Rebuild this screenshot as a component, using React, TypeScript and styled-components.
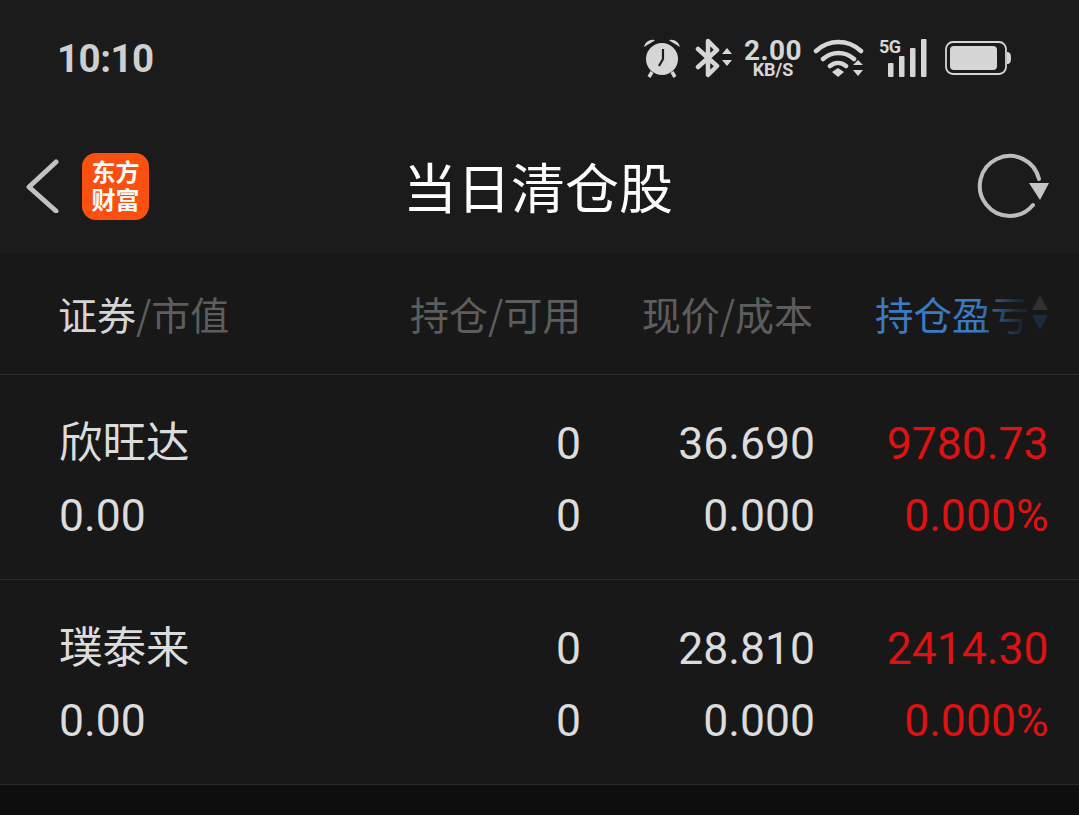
import React from "react";
import styled, { createGlobalStyle } from "styled-components";

const Global = createGlobalStyle`
  html, body { margin: 0; padding: 0; background: #0e0e0e; }
  * { box-sizing: border-box; }
`;
const FONT = `Roboto, "Noto Sans CJK SC", sans-serif`;
const Page = styled.div`
  width: 1079px; height: 815px; overflow: hidden; background: #0e0e0e; font-family: ${FONT};
  display: flex; flex-direction: column;
`;
const TopArea = styled.div`background: #1b1b1b; height: 254px; display: flex; flex-direction: column;`;
const StatusBar = styled.div`
  height: 116px; padding: 0 68px 0 57px; display: flex; align-items: center; justify-content: space-between; color: #d4d4d4;
`;
const Clock = styled.div`font-size: 38.5px; font-weight: 700; letter-spacing: -0.5px; color: #cfcfcf;`;
const StatusIcons = styled.div`display: flex; align-items: center; height: 40px; color: #d6d6d6;`;
const Speed = styled.div`
  width: 60px; margin: 0 10px 0 8px; display: flex; flex-direction: column; align-items: center; font-weight: 700;
`;
const SpeedValue = styled.span`font-size: 28px; line-height: 23px; letter-spacing: 0.4px;`;
const SpeedUnit = styled.span`font-size: 18px; line-height: 15px;`;
const Signal = styled.div`position: relative; width: 50px; height: 38px; margin: 0 16px 0 14px;`;
const FiveG = styled.span`position: absolute; left: 0; top: -1px; font-size: 18px; line-height: 18px; font-weight: 700; letter-spacing: -0.5px;`;
const NavBar = styled.div`flex: 1; position: relative; display: flex; align-items: center; padding: 2px 30px 0 25px; justify-content: space-between;`;
const NavLeft = styled.div`display: flex; align-items: center; gap: 23px;`;
const Logo = styled.div`
  width: 67px; height: 67px; border-radius: 14px; background: #fb5010; color: #fff; font-weight: 700; font-size: 24px; line-height: 28px; padding-bottom: 2px;
  display: flex; flex-direction: column; align-items: center; justify-content: center; font-family: "Noto Sans CJK SC", sans-serif;
`;
const Title = styled.h1`
  position: absolute; left: 0; right: 3px; top: 35px; margin: 0; text-align: center; font-size: 54px; line-height: 70px; font-weight: 400; color: #fff;
  font-family: "Noto Sans CJK SC", sans-serif;
`;
const TableHeader = styled.div`
  height: 121px; background: #181818; border-bottom: 1px solid #2a2a2a; position: relative; padding: 0 30px 2px 58px;
  display: grid; grid-template-columns: 352px 168px 235px 236px; align-items: center; color: #5d5d5d;
  font-family: "Noto Sans CJK SC", sans-serif;
`;
const HeaderCell = styled.div<{ $right?: boolean }>`
  text-align: ${(p) => (p.$right ? "right" : "left")}; white-space: nowrap; line-height: 50px; font-size: 39px;
`;
const Strong = styled.span`color: #d5d5d5;`;
const SortCell = styled.div`
  text-align: right; position: relative; color: #3a7bc4; font-size: 38.5px; line-height: 50px; white-space: nowrap; padding-right: 20px;
`;
const Fade = styled.div`
  position: absolute; right: 0; top: -6px; width: 72px; height: 62px;
  background: linear-gradient(to right, rgba(24,24,24,0), rgba(24,24,24,0.85) 60%, rgba(24,24,24,0.95));
`;
const SortIcon = styled.svg`position: absolute; right: 0; top: 7px;`;
const Row = styled.div`
  height: 205px; background: #181818; border-bottom: 1px solid #2a2a2a; padding: 33px 30px 0 59px;
  display: grid; grid-template-columns: 354px 168px 234px 233.5px; grid-auto-rows: 72px; align-items: start; font-size: 44.5px; color: #dcdcdc;
`;
const Cell = styled.div<{ $right?: boolean; $red?: boolean }>`
  text-align: ${(p) => (p.$right ? "right" : "left")}; line-height: 72px; white-space: nowrap; color: ${(p) => (p.$red ? "#de1212" : "#dcdcdc")};
`;
const Name = styled(Cell)`font-family: "Noto Sans CJK SC", sans-serif; font-size: 43.5px; font-weight: 400; line-height: 64px;`;

const rows = [
  { name: "欣旺达", price: "36.690", pl: "9780.73" },
  { name: "璞泰来", price: "28.810", pl: "2414.30" },
];

export default function App() {
  return (
    <Page>
      <Global />
      <TopArea>
        <StatusBar>
          <Clock>10:10</Clock>
          <StatusIcons>
            <svg width="38" height="40" viewBox="0 0 38 40" style={{ marginRight: 14 }}>
              <circle cx="19" cy="21" r="16" fill="currentColor" />
              <path d="M20 11v10l-4 7" fill="none" stroke="#1b1b1b" strokeWidth="2.2" />
              <path d="M1 9c1-5 6-8 10-7 1 0 1 1 0 1zM37 9c-1-5-6-8-10-7-1 0-1 1 0 1z" fill="currentColor" />
              <path d="M9 34l-3 5M29 34l3 5" stroke="currentColor" strokeWidth="3.5" />
            </svg>
            <svg width="40" height="40" viewBox="0 0 40 40">
              <path d="M3 11l19 17-9 9V3l9 9-19 17" fill="none" stroke="currentColor" strokeWidth="4.5" strokeLinejoin="round" strokeLinecap="round" />
              <path d="M27 16l5-6 5 6zM27 22h10l-5 6z" fill="currentColor" />
            </svg>
            <Speed>
              <SpeedValue>2.00</SpeedValue>
              <SpeedUnit>KB/S</SpeedUnit>
            </Speed>
            <svg width="52" height="40" viewBox="0 0 52 40">
              <path d="M3 13c13-12 32-12 45 0M10 21c9-8 22-8 31 0M17 28c5-4 11-4 16 0" fill="none" stroke="currentColor" strokeWidth="4.5" strokeLinecap="round" />
              <path d="M19 34l6-4 6 4-6 5z" fill="currentColor" />
              <path d="M40 27l5-5 5 5zM40 32h10l-5 6z" fill="currentColor" />
            </svg>
            <Signal>
              <FiveG>5G</FiveG>
              <svg width="46" height="38" viewBox="0 0 46 38" style={{ position: "absolute", left: 7, top: 0 }}>
                <rect x="2" y="24" width="5.5" height="14" rx="1" fill="currentColor" />
                <rect x="13" y="17" width="5.5" height="21" rx="1" fill="currentColor" />
                <rect x="24" y="9" width="5.5" height="29" rx="1" fill="currentColor" />
                <rect x="35" y="0" width="5.5" height="38" rx="1" fill="currentColor" />
              </svg>
            </Signal>
            <svg width="66" height="36" viewBox="0 0 66 36">
              <rect x="1" y="2" width="60" height="32" rx="7" fill="none" stroke="currentColor" strokeWidth="1.8" />
              <rect x="5" y="6" width="47" height="24" rx="4" fill="currentColor" />
              <path d="M62 12c3 0 4 2 4 6s-1 6-4 6z" fill="currentColor" />
            </svg>
          </StatusIcons>
        </StatusBar>
        <NavBar>
          <NavLeft>
            <svg width="34" height="54" viewBox="0 0 34 54">
              <path d="M31 3L4 28l27 24" fill="none" stroke="#c2c2c2" strokeWidth="5" strokeLinecap="round" strokeLinejoin="round" />
            </svg>
            <Logo>
              <span>东方</span>
              <span>财富</span>
            </Logo>
          </NavLeft>
          <Title>当日清仓股</Title>
          <svg width="72" height="66" viewBox="0 0 72 66">
            <path d="M62 26A30 30 0 1 0 56 52" fill="none" stroke="#bdbdbd" strokeWidth="4" strokeLinecap="round" />
            <path d="M52 30h20l-9 17z" fill="#c6c6c6" />
          </svg>
        </NavBar>
      </TopArea>
      <TableHeader>
        <HeaderCell>
          <Strong>证券</Strong>/市值
        </HeaderCell>
        <HeaderCell $right>持仓/可用</HeaderCell>
        <HeaderCell $right>现价/成本</HeaderCell>
        <SortCell>
          持仓盈亏
          <Fade />
          <SortIcon width="18" height="36" viewBox="0 0 18 36">
            <path d="M9 0l8 15H1z" fill="#303030" />
            <path d="M1 20h16l-8 15z" fill="#1c2b3c" />
          </SortIcon>
        </SortCell>
      </TableHeader>
      {rows.map((r) => (
        <Row key={r.name}>
          <Name>{r.name}</Name>
          <Cell $right>0</Cell>
          <Cell $right>{r.price}</Cell>
          <Cell $right $red>{r.pl}</Cell>
          <Cell>0.00</Cell>
          <Cell $right>0</Cell>
          <Cell $right>0.000</Cell>
          <Cell $right $red>0.000%</Cell>
        </Row>
      ))}
    </Page>
  );
}
